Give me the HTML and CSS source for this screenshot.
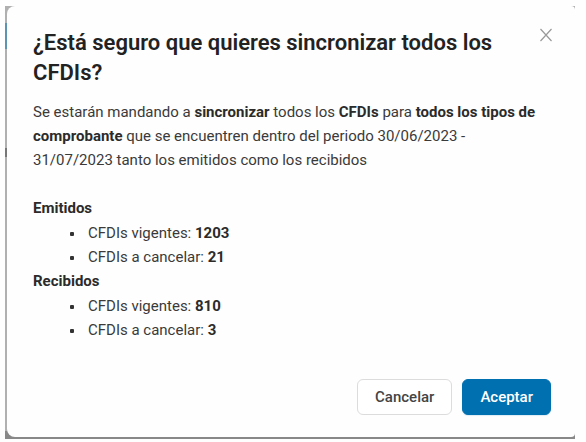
FILE: index.html
```html
<!DOCTYPE html>
<html lang="es">
<head>
<meta charset="utf-8">
<meta name="viewport" content="width=device-width, initial-scale=1">
<title>Sincronizar CFDIs</title>
<link rel="stylesheet" href="styles.css">
</head>
<body>
<div class="backdrop">
  <section class="dialog" role="dialog" aria-labelledby="dialog-title">
    <header class="dialog-header">
      <h1 class="dialog-title" id="dialog-title">¿Está seguro que quieres sincronizar todos los CFDIs?</h1>
      <button class="close" type="button" aria-label="Cerrar">
        <svg class="close-icon" viewBox="0 0 14 14" aria-hidden="true"><path d="M1.5 1 L12.5 13 M12.5 1 L1.5 13"/></svg>
      </button>
    </header>
    <div class="dialog-body">
      <p class="message">Se estarán mandando a <strong>sincronizar</strong> todos los <strong>CFDIs</strong> para <strong>todos los tipos de comprobante</strong> que se encuentren dentro del periodo 30/06/2023 - 31/07/2023 tanto los emitidos como los recibidos</p>
      <h2 class="group">Emitidos</h2>
      <ul class="counts">
        <li>CFDIs vigentes: <strong>1203</strong></li>
        <li>CFDIs a cancelar: <strong>21</strong></li>
      </ul>
      <h2 class="group">Recibidos</h2>
      <ul class="counts">
        <li>CFDIs vigentes: <strong>810</strong></li>
        <li>CFDIs a cancelar: <strong>3</strong></li>
      </ul>
    </div>
    <footer class="actions">
      <button class="button" type="button">Cancelar</button>
      <button class="button button-primary" type="button">Aceptar</button>
    </footer>
  </section>
</div>
</body>
</html>
```
FILE: styles.css
```css
* {
  box-sizing: border-box;
}

body {
  margin: 0;
  background: #fefefe;
  color: #3a3a3a;
  font: 15px/24px Roboto, sans-serif;
}

/* Page strip visible around the dialog */
.backdrop {
  margin: 6px 11px 0 5px;
  padding: 0 0 2px 2px;
  background:
    linear-gradient(#5b93b3, #5b93b3) 0 17px / 2px 26px no-repeat,
    linear-gradient(#777, #777) 0 142px / 2px 9px no-repeat,
    linear-gradient(#888, #888) 0 100% / 100% 8px no-repeat,
    #b0b0b0;
}

.dialog {
  padding: 22px 24px 22px 26px;
  border-radius: 8px 4px 4px 8px;
  background: #fefefe;
}

.dialog-header {
  display: flex;
  align-items: flex-start;
  justify-content: space-between;
  gap: 24px;
}

.dialog-title {
  margin: 0;
  font-size: 22px;
  font-weight: 600;
  line-height: 30px;
  color: #222;
}

.close {
  display: flex;
  flex: none;
  margin-right: -2px;
  padding: 0;
  border: 0;
  background: none;
  cursor: pointer;
}

.close-icon {
  width: 14px;
  height: 14px;
  fill: none;
  stroke: #999;
  stroke-width: 1.2;
}

.dialog-body {
  margin-top: 12px;
}

.message {
  margin: 0 0 24px;
  padding-right: 8px;
}

strong,
.group {
  font-weight: 700;
  color: #2b2b2b;
}

.group {
  margin: 0;
  font-size: 15px;
}

.counts {
  margin: 1px 0 0;
  padding: 0 0 0 37px;
  list-style: none;
}

.counts li::before {
  content: "";
  display: inline-block;
  width: 4px;
  height: 4px;
  margin-right: 14px;
  border-radius: 1px;
  background: #333;
  vertical-align: 2px;
}

.actions {
  display: flex;
  justify-content: flex-end;
  gap: 10px;
  margin-top: 37px;
}

.button {
  padding: 5px 17px;
  border: 1px solid #dcdcdc;
  border-radius: 6px;
  background: #fff;
  color: #444;
  font: 500 15px/24px Roboto, sans-serif;
  cursor: pointer;
}

.button-primary {
  border-color: #0070b0;
  background: #0070b0;
  color: #fff;
  box-shadow: 0 1px 1px #0070b022;
}
```
